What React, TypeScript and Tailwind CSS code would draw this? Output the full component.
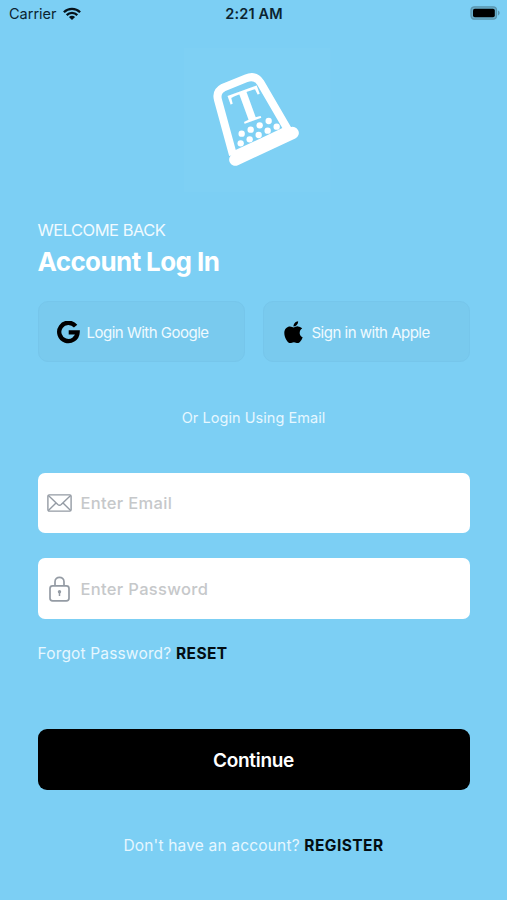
import React from 'react';

const WifiIcon = () => (
  <svg className="w-[18px] h-[13px] -mt-[2px]" viewBox="0 0 18 13" fill="none" stroke="#06131a" strokeWidth="2.3">
    <path d="M0.9 5.2C5.4 0.7 12.6 0.7 17.1 5.2" />
    <path d="M3.7 8.1C6.6 5.2 11.4 5.2 14.3 8.1" />
    <path d="M9 13L5.9 9.9C7.6 8.3 10.4 8.3 12.1 9.9Z" fill="#06131a" stroke="none" />
  </svg>
);

const BatteryIcon = () => (
  <svg className="w-[31px] h-[14px] -mt-[2px]" viewBox="0 0 31 14" fill="none">
    <rect x="1" y="0.8" width="25.5" height="12.4" rx="3.4" fill="#69aecb" stroke="#5a95ae" strokeWidth="1.3" />
    <rect x="3" y="2.7" width="21.8" height="8.6" rx="1.8" fill="#000" />
    <path d="M28 4.6C30.2 5.4 30.2 8.6 28 9.4Z" fill="#5a95ae" />
  </svg>
);

const DOTS = [
  [185, 281], [212, 269], [239, 256], [266, 243],
  [182, 310], [209, 298], [236, 285], [263, 272], [290, 260],
];

const Logo = () => (
  <svg className="w-40 h-40" viewBox="0 0 480 480">
    <rect x="12" y="24" width="440" height="432" fill="#7ed0f4" />
    <path
      d="M159 345L114 180Q107 155 130 143L198 115Q226 104 241 127L326 273"
      fill="none"
      stroke="#fff"
      strokeWidth="24"
    />
    <path d="M166 346L332 268" stroke="#fff" strokeWidth="28" />
    <path d="M166 359L338 279" stroke="#fff" strokeWidth="37" strokeLinecap="round" />
    <text
      transform="translate(219 242) rotate(-20)"
      textAnchor="middle"
      fill="#fff"
      fontFamily="Liberation Serif, serif"
      fontWeight="700"
      fontSize="146"
    >
      T
    </text>
    {DOTS.map(([x, y]) => (
      <circle key={`${x}-${y}`} cx={x} cy={y} r="9.5" fill="#fff" />
    ))}
  </svg>
);

const GoogleIcon = () => (
  <svg className="w-[23px] h-[23px]" viewBox="0 0 23 23" fill="none" stroke="#000" strokeWidth="4.3">
    <path d="M18.6 5.2A9.2 9.2 0 1 0 20.6 11.4H11.7" />
  </svg>
);

const AppleIcon = () => (
  <svg className="w-[19px] h-[23px]" viewBox="0 0 384 470" fill="#000">
    <path d="M319 240c0-37 16-64 50-85-19-27-47-42-85-45-35-3-74 21-88 21-15 0-49-20-76-20C64 112 4 156 4 245c0 27 5 54 14 82 13 37 59 127 107 125 25 0 43-18 76-18 32 0 48 18 76 18 49 0 90-82 102-119-65-31-60-91-60-93zM262 76c27-32 25-62 24-72-24 1-52 16-68 35-18 20-28 45-26 71 26 2 50-11 70-34z" />
  </svg>
);

const MailIcon = () => (
  <svg className="w-[25px] h-[18px] shrink-0" viewBox="0 0 25 18" fill="none" stroke="#949ba4" strokeWidth="1.4" strokeLinejoin="round">
    <rect x="0.9" y="0.9" width="23.2" height="16.2" rx="1.3" />
    <path d="M1.4 1.5L10.8 10.5Q12.5 12 14.2 10.5L23.6 1.5M1.4 16.5L9 8.9M23.6 16.5L16 8.9" />
  </svg>
);

const LockIcon = () => (
  <svg className="w-[21px] h-[26px] shrink-0" viewBox="0 0 21 26" fill="none" stroke="#949ba4" strokeWidth="1.7">
    <rect x="1" y="9.8" width="19" height="15" rx="2.6" />
    <path d="M6 9.8V5.8C6 -0.1 15 -0.1 15 5.8V9.8" />
    <path d="M10.5 16.5V20" strokeWidth="1.5" />
    <circle cx="10.5" cy="15.8" r="1.7" fill="#949ba4" stroke="none" />
  </svg>
);

const SocialButton = ({ icon, label }: { icon: React.ReactNode, label: string }) => (
  <button className="flex items-center h-[61px] pl-[18px] pt-[2px] rounded-[10px] border border-[#76c6eb] bg-[#79caee] text-[15px] tracking-[-0.5px] text-[#f0faff]">
    <span className="flex w-[23px] mr-[7px] justify-center">{icon}</span>
    <span className="pt-px">{label}</span>
  </button>
);

const Field = ({ icon, type, placeholder, className }: { icon: React.ReactNode, type: string, placeholder: string, className: string }) => (
  <label className={`flex items-center rounded-[7px] bg-white pl-[9px] ${className}`}>
    <span className="flex w-[25px] mr-[9px] justify-center">{icon}</span>
    <input
      type={type}
      placeholder={placeholder}
      className="flex-1 min-w-0 pt-px outline-none text-[16.5px] font-medium tracking-[0.33px] text-gray-800 placeholder:text-[#c6c8ca]"
    />
  </label>
);

export default function App() {
  return (
    <div className="w-full h-screen overflow-hidden bg-[#7ccff4] font-['Inter',sans-serif] flex flex-col">
      {/* Status bar */}
      <div className="grid grid-cols-3 items-center h-7 pl-[8px] pr-[6px] text-[#0b2430]">
        <div className="flex items-center gap-[6px] pl-px text-[14.5px]">
          <span>Carrier</span>
          <WifiIcon />
        </div>
        <span className="text-center text-[14.5px] font-semibold tracking-[0.15px] -ml-px">2:21 AM</span>
        <div className="flex justify-end">
          <BatteryIcon />
        </div>
      </div>

      <div className="flex justify-center mt-3 pl-[13px]">
        <Logo />
      </div>

      <div className="flex flex-col px-[37.5px]">
        <p className="mt-5 h-5 leading-5 text-[16.5px] tracking-[-0.5px] text-[#f0faff]">WELCOME BACK</p>
        <h1 className="mt-[6px] h-8 leading-8 text-[26px] font-bold tracking-[-0.6px] text-white">Account Log In</h1>

        <div className="grid grid-cols-2 gap-[18px] mt-[23px]">
          <SocialButton icon={<GoogleIcon />} label="Login With Google" />
          <SocialButton icon={<AppleIcon />} label="Sign in with Apple" />
        </div>

        <p className="mt-[46px] h-5 leading-5 text-center text-[14.5px] tracking-[0.05px] text-[#e6f7ff]">Or Login Using Email</p>

        <Field icon={<MailIcon />} type="email" placeholder="Enter Email" className="mt-[45px] h-[60px]" />
        <Field icon={<LockIcon />} type="password" placeholder="Enter Password" className="mt-[25px] h-[61px]" />

        <p className="mt-[25px] h-5 leading-5 text-[15.5px] tracking-[0.16px] text-[#e6f7ff] whitespace-nowrap">
          Forgot Password? <a className="font-bold text-[#030d12] tracking-[0.45px]">RESET</a>
        </p>

        <button className="mt-[65px] h-[61px] pt-[3px] rounded-[9px] bg-black text-[19px] font-semibold tracking-[-0.3px] text-white">
          Continue
        </button>

        <p className="mt-[46px] h-5 leading-5 text-center text-[15.5px] tracking-[0.18px] text-[#e6f7ff] whitespace-nowrap">
          Don't have an account? <a className="font-bold text-[#030d12] tracking-[0.45px]">REGISTER</a>
        </p>
      </div>
    </div>
  );
}
